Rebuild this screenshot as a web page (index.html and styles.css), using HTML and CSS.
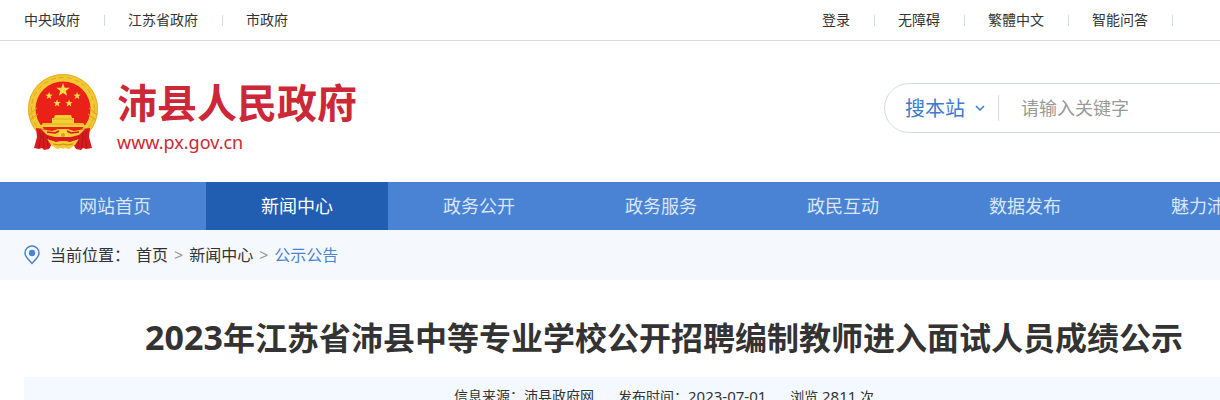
FILE: index.html
```html
<!DOCTYPE html>
<html lang="zh-CN">
<head>
    <meta charset="UTF-8">
    <meta name="viewport" content="width=device-width, initial-scale=1.0">
    <title>沛县人民政府</title>
    <link rel="stylesheet" href="styles.css">
</head>
<body>
    <!-- top links -->
    <div class="topbar">
        <div class="wrap topbar-inner">
            <ul class="top-links">
                <li><a href="#">中央政府</a></li>
                <li><a href="#">江苏省政府</a></li>
                <li><a href="#">市政府</a></li>
            </ul>
            <ul class="top-links top-user">
                <li><a href="#">登录</a></li>
                <li><a href="#">无障碍</a></li>
                <li><a href="#">繁體中文</a></li>
                <li><a href="#">智能问答</a></li>
            </ul>
        </div>
    </div>

    <!-- logo and search -->
    <header class="wrap header">
        <a href="#" class="logo">
            <svg class="emblem" viewBox="0 0 70 78" width="70" height="78" aria-hidden="true">
                <!-- wheat ring -->
                <circle cx="35" cy="36" r="35" fill="#f3c832"/>
                <circle cx="35" cy="36" r="31.500" fill="none" stroke="#dcaa22" stroke-width="1" stroke-dasharray="5 3"/>
                <circle cx="35" cy="36" r="34.500" fill="none" stroke="#e0b02a" stroke-width="1"/>
                <circle cx="35" cy="36" r="27.500" fill="#ea2118"/>
                <path d="M1 42l8-7M2 47l8-6M69 42l-8-7M68 47l-8-6" stroke="#d9a11b" fill="none"/>
                <!-- stars -->
                <path id="star" d="M35 10l1.700 4.700 5 .1-4 3.100 1.500 4.900-4.200-2.900-4.200 2.900 1.500-4.900-4-3.100 5-.1z" fill="#fbdc4a"/>
                <use href="#star" transform="translate(1.8 13.5) scale(.55)"/>
                <use href="#star" transform="translate(29.8 13.5) scale(.55)"/>
                <use href="#star" transform="translate(9.8 21) scale(.55)"/>
                <use href="#star" transform="translate(21.8 21) scale(.55)"/>
                <!-- gate -->
                <path d="M27 42h16l1 3h-18zM24 45h22v5h9l3 4H12l3-4h9z" fill="#f6cf35"/>
                <path d="M25 46h20M15 51h40" stroke="#dcaa22" fill="none"/>
                <!-- ribbons -->
                <path d="M8 55l8 1 8 5h22l8-5 8-1-1 9 3 11-6 1-3-1-2 2-5-1-3-5H24l-3 5-5 1-2-2-3 1-5-1 3-11z" fill="#d91a1e"/>
                <path d="M11 59l2 4-2 12M59 59l-2 4 2 12M15 60l1 15M55 60l-1 15M19 62l1 13M51 62l-1 13" stroke="#b5151b" fill="none"/>
                <!-- swags and gear -->
                <path d="M13 56l11 2 6-2h10l6 2 11-2-6 6-8 2H27l-8-2z" fill="#f3c832"/>
                <path d="M19 59l8 1 4-2M51 59l-8 1-4-2" stroke="#d91a1e" stroke-width="1.500" fill="none"/>
                <path d="M31 61a4 4 0 0 1 8 0l2 3H29z" fill="#f9d846"/>
                <circle cx="35" cy="62" r="2" fill="#d9a11b"/>
                <path d="M19 66l9 3 4-1h6l4 1 9-3-4 6-6 4-4-1-2 1-2-1-4 1-6-4z" fill="#f3c832"/>
                <path d="M25 71l6 1 4-1 4 1 6-1" stroke="#c98a18" fill="none"/>
            </svg>
            <span class="logo-text">
                <strong class="logo-name">沛县人民政府</strong>
                <span class="logo-url">www.px.gov.cn</span>
            </span>
        </a>
        <form class="search">
            <div class="search-scope">
                <select class="search-select" aria-label="搜索范围">
                    <option>搜本站</option>
                </select>
                <svg class="search-arrow" viewBox="0 0 10 6" width="10" height="6" aria-hidden="true">
                    <path d="M1 1l4 4 4-4" fill="none" stroke="#3c7bcf" stroke-width="1.500"/>
                </svg>
            </div>
            <input class="search-input" type="text" placeholder="请输入关键字" aria-label="请输入关键字">
        </form>
    </header>

    <!-- main navigation -->
    <nav class="nav">
        <div class="wrap nav-inner">
            <a href="#">网站首页</a>
            <a href="#" class="active">新闻中心</a>
            <a href="#">政务公开</a>
            <a href="#">政务服务</a>
            <a href="#">政民互动</a>
            <a href="#">数据发布</a>
            <a href="#">魅力沛县</a>
        </div>
    </nav>

    <!-- breadcrumb -->
    <div class="crumb">
        <div class="wrap crumb-inner">
            <svg class="pin" viewBox="0 0 16 20" width="16" height="20" aria-hidden="true">
                <path d="M8 18.500C5 15.200 1 11.800 1 8a7 7 0 0 1 14 0c0 3.800-4 7.200-7 10.500z" fill="none" stroke="#4a83d3" stroke-width="1.500"/>
                <circle cx="8" cy="8" r="3.200" fill="#4a83d3"/>
            </svg>
            <span class="crumb-label">当前位置：</span>
            <a href="#">首页</a>
            <span class="sep">&gt;</span>
            <a href="#">新闻中心</a>
            <span class="sep">&gt;</span>
            <a href="#" class="current">公示公告</a>
        </div>
    </div>

    <main class="wrap article">
        <h1><span class="year">2023</span>年江苏省沛县中等专业学校公开招聘编制教师进入面试人员成绩公示</h1>
        <div class="meta">
            <span>信息来源：沛县政府网</span>
            <span>发布时间：<span class="num">2023-07-01</span></span>
            <span>浏览 <span class="num">2811</span> 次</span>
        </div>
    </main>
</body>
</html>
```
FILE: styles.css
```css
* {
    box-sizing: border-box;
}
body {
    margin: 0;
    font-family: "Noto Sans", "Noto Sans CJK SC", sans-serif;
    font-size: 14px;
    color: #333;
    background-color: #fff;
    overflow-x: hidden;
}
a {
    color: inherit;
    text-decoration: none;
}
.wrap {
    min-width: 1280px;
    max-width: 1280px;
    margin: 0 24px;
}

/* top bar */
.topbar {
    border-bottom: 1px solid #d9dcdc;
}
.topbar-inner {
    display: flex;
    justify-content: space-between;
}
.top-links {
    display: flex;
    margin: 0;
    padding: 0;
    list-style: none;
    line-height: 40px;
}
.top-links li {
    display: flex;
    align-items: center;
}
.top-links li + li::before,
.top-user::after {
    content: "";
    width: 1px;
    height: 11px;
    margin: 0 23px 0 24px;
    background-color: #d3d9dd;
}
.top-user {
    align-items: center;
    padding-right: 108px;
}

/* header */
.header {
    display: flex;
    align-items: center;
    justify-content: space-between;
    padding: 32px 0 31px;
}
.logo {
    display: flex;
    margin-left: 4px;
    gap: 19px;
    color: #cc2838;
}
.logo-text {
    display: flex;
    flex-direction: column;
}
.logo-name {
    font-size: 40px;
    line-height: 60px;
}
.logo-url {
    font-size: 18px;
    line-height: 18px;
}
.search {
    display: flex;
    align-items: center;
    width: 420px;
    height: 50px;
    margin-bottom: 8px;
    border: 1px solid #d3dbe1;
    border-radius: 25px;
}
.search-scope {
    display: flex;
    align-items: center;
    gap: 10px;
    height: 26px;
    padding: 0 13px 0 20px;
    border-right: 1px solid #d3d9dd;
}
.search-select {
    appearance: none;
    border: none;
    padding: 0;
    background: none;
    color: #3c7bcf;
    font-family: inherit;
    font-size: 20px;
}
.search-input {
    flex: 1;
    min-width: 0;
    border: none;
    padding: 0 22px;
    background: none;
    outline: none;
    font-family: inherit;
    font-size: 18px;
}
.search-input::placeholder {
    color: #999;
}

/* navigation */
.nav {
    background-color: #4a83d3;
}
.nav-inner {
    display: flex;
}
.nav a {
    width: 182px;
    line-height: 48px;
    font-size: 18px;
    text-align: center;
    color: #dbe6f6;
}
.nav a.active {
    background-color: #215eb2;
    color: #fff;
}

/* breadcrumb */
.crumb {
    background-color: #f5f9fe;
}
.crumb-inner {
    display: flex;
    align-items: center;
    gap: 6px;
    font-size: 16px;
    line-height: 50px;
}
.crumb-label {
    margin-left: 4px;
}
.sep {
    color: #999;
}
.current {
    color: #4a83d3;
}

/* article */
.article {
    padding-top: 33px;
}
.article h1 {
    margin: 0 0 15px;
    font-size: 32px;
    line-height: 48px;
    text-align: center;
}
.year {
    font-size: 34px;
}
.meta {
    display: flex;
    justify-content: center;
    gap: 24px;
    line-height: 38px;
    background-color: #f3f9fe;
}
.num {
    font-size: 15px;
}
```
